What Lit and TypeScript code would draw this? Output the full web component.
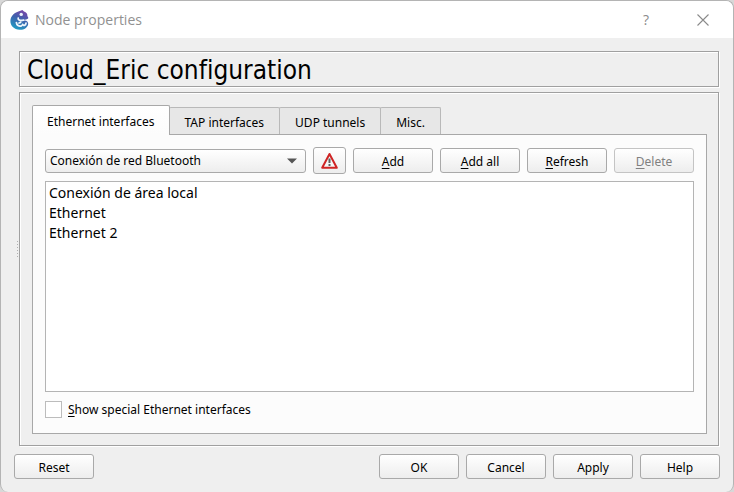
import { LitElement, html, css, svg } from "lit";
import { customElement, state } from "lit/decorators.js";
import { classMap } from "lit/directives/class-map.js";

const logo = svg`
  <defs>
    <linearGradient id="body" x1="0.7" y1="0" x2="0.3" y2="1">
      <stop offset="0" stop-color="#7a45a8"/>
      <stop offset="0.45" stop-color="#3d62ad"/>
      <stop offset="1" stop-color="#1f9fc4"/>
    </linearGradient>
  </defs>
  <path fill="url(#body)" d="M8.4 1.4 12.4 0 14 1.6C16.4 2.2 17.6 4 17.4 6L18.4 8C17.4 9.6 15 10 13.4 9.4L13.4 10.6C16 9.8 18.4 11.4 18.2 14 17.8 17.6 14 20 9.6 19.8 4 19.6 .2 15.6 .4 10.8 .6 6.4 3.4 3 8.4 1.4Z"/>
  <circle cx="11.2" cy="4.4" r="1.7" fill="#eef2fa"/>
  <path fill="none" stroke="#eef5fb" stroke-width="1.8" stroke-linecap="round" d="M8.2 8.2C7.8 10 10 11 13.4 10.2M6.4 12.6C6.6 15.2 9 16.8 11.4 15.8M16 13.2C15.8 15.6 13.2 16 12.6 14.4M9 13 10.6 12.4"/>
`;

@customElement("app-root")
export class AppRoot extends LitElement {
  @state() private tab = 0;

  private tabs = ["Ethernet interfaces", "TAP interfaces", "UDP tunnels", "Misc."];
  private interfaces = ["Conexión de área local", "Ethernet", "Ethernet 2"];

  static styles = css`
    :host {
      display: block;
      background: #d8d8d8;
      color: #000;
      font: 12px/16px "Noto Sans", sans-serif;
    }
    * { box-sizing: border-box; }
    .window {
      display: flex;
      flex-direction: column;
      min-height: 100vh;
      border: 1px solid #b4b4b4;
      border-bottom: 0;
      border-radius: 8px;
      background: #efefef;
      overflow: hidden;
    }
    .titlebar {
      display: flex;
      align-items: center;
      height: 37px;
      padding: 0 20px 0 9px;
      background: #fff;
      color: #919191;
      font: 14px/20px "Open Sans", "Noto Sans", sans-serif;
    }
    .logo { width: 20px; height: 20px; margin-right: 5px; }
    .title { flex: 1; }
    .caption {
      display: grid;
      place-items: center;
      width: 20px;
      height: 28px;
      margin-left: 37px;
      padding: 0;
      border: 0;
      background: none;
      color: #8a8a8a;
      font: inherit;
    }
    .content { flex: 1; display: flex; padding: 13px 14px 8px 14px; }
    .handle {
      flex: none;
      width: 4px;
      display: flex;
      flex-direction: column;
      justify-content: center;
      align-items: center;
      gap: 2px;
    }
    .handle i { width: 1px; height: 1px; background: #b0b0b0; }
    .main { flex: 1; display: flex; flex-direction: column; gap: 5px; }
    .frame { border: 1px solid #a0a0a0; box-shadow: 1px 1px 0 #fff, inset 1px 1px 0 #fff; }
    h1 {
      margin: 0;
      height: 36px;
      padding: 0 7px;
      font: 26px/36px "DejaVu Sans Condensed", "Noto Sans", sans-serif;
      font-variant-ligatures: none;
    }
    .panel { flex: 1; display: flex; flex-direction: column; padding: 12px 11px 11px 12px; }
    .tabs { display: flex; align-items: flex-end; height: 30px; }
    .tab {
      height: 27px;
      margin: 0 0 1px -1px;
      padding: 3px 15px 0;
      border: 1px solid #b9b9b9;
      border-bottom: 0;
      border-radius: 2px 2px 0 0;
      background: #e7e7e7;
      color: #000;
      font: inherit;
    }
    .tab:first-child { margin-left: 0; }
    .tab.on {
      height: 30px;
      margin-bottom: 0;
      padding: 2px 14px 0;
      border-color: #a8a8a8;
      background: linear-gradient(#fff, #fcfcfc);
      z-index: 1;
    }
    .pane {
      flex: 1;
      display: flex;
      flex-direction: column;
      margin-top: -1px;
      padding: 12px 12px 15px;
      border: 1px solid #a8a8a8;
      background: #fcfcfc;
    }
    .tools { display: flex; align-items: center; gap: 7px; margin-bottom: 7px; }
    .btn, .combo {
      border: 1px solid #a9a9a9;
      border-radius: 3px;
      background: linear-gradient(#fff, #ededed);
      color: #000;
      font: inherit;
    }
    .btn { flex: none; width: 80px; height: 25px; padding: 2px 0 0; }
    .btn:disabled { border-color: #c4c4c4; color: #808080; }
    .btn.warn { width: 33px; height: 27px; padding: 0; display: grid; place-items: center; }
    .select { flex: 1; display: grid; align-items: center; }
    .select > * { grid-area: 1 / 1; }
    .combo { appearance: none; width: 100%; height: 24px; padding: 0 24px 0 4px; }
    .arrow { justify-self: end; margin-right: 9px; pointer-events: none; }
    .list {
      flex: 1;
      margin: 0;
      padding: 1px 3px;
      border: 1px solid #b4b4b4;
      background: #fff;
      list-style: none;
      font-size: 14px;
      line-height: 20px;
    }
    .check { display: flex; align-items: center; gap: 6px; margin-top: 9px; align-self: flex-start; }
    .check input {
      appearance: none;
      width: 17px;
      height: 17px;
      margin: 0;
      border: 1px solid #bcbcbc;
      background: #fff;
    }
    .check input:checked { background: #6a6a6a; box-shadow: inset 0 0 0 3px #fff; }
    .footer { display: flex; gap: 7px; padding: 0 13px 13px; }
    .reset { margin-right: auto; }
    u { text-underline-offset: 2px; text-decoration-thickness: 1px; }
  `;

  render() {
    return html`
      <div class="window">
        <header class="titlebar">
          <svg class="logo" viewBox="0 0 20 20" aria-hidden="true">${logo}</svg>
          <span class="title">Node properties</span>
          <button class="caption" aria-label="Context help">?</button>
          <button class="caption" aria-label="Close">
            <svg width="12" height="12" viewBox="0 0 12 12"><path d="M.5.5l11 11M11.5.5l-11 11" fill="none" stroke="#8a8a8a" stroke-width="1.1"/></svg>
          </button>
        </header>
        <main class="content">
          <div class="handle">${[0, 1, 2, 3, 4, 5].map(() => html`<i></i>`)}</div>
          <div class="main">
            <h1 class="frame">Cloud_Eric configuration</h1>
            <section class="frame panel">
              <div class="tabs" role="tablist">
                ${this.tabs.map((t, i) => html`
                  <button role="tab" class=${classMap({ tab: true, on: i === this.tab })}
                    aria-selected=${i === this.tab} @click=${() => (this.tab = i)}>${t}</button>`)}
              </div>
              <div class="pane" role="tabpanel">
                <div class="tools">
                  <div class="select">
                    <select class="combo" aria-label="Interface"><option>Conexión de red Bluetooth</option></select>
                    <svg class="arrow" width="10" height="6" viewBox="0 0 10 6"><path d="M0 .5h10L5 5.5z" fill="#555"/></svg>
                  </div>
                  <button class="btn warn" aria-label="Warning">
                    <svg width="18" height="18" viewBox="0 0 18 18">
                      <path d="M8.5 2 15.8 15.8H1.2Z" fill="#f6f6f6" stroke="#cf2424" stroke-width="2" stroke-linejoin="round"/>
                      <path d="M8.5 6.6v4.4M8.5 12v2" stroke="#5e5e5e" stroke-width="2"/>
                    </svg>
                  </button>
                  <button class="btn"><u>A</u>dd</button>
                  <button class="btn"><u>A</u>dd all</button>
                  <button class="btn"><u>R</u>efresh</button>
                  <button class="btn" disabled><u>D</u>elete</button>
                </div>
                <ul class="list" role="listbox" aria-label="Interfaces">
                  ${this.interfaces.map((n) => html`<li role="option">${n}</li>`)}
                </ul>
                <label class="check"><input type="checkbox" /><span><u>S</u>how special Ethernet interfaces</span></label>
              </div>
            </section>
          </div>
        </main>
        <footer class="footer">
          <button class="btn reset">Reset</button>
          <button class="btn">OK</button>
          <button class="btn">Cancel</button>
          <button class="btn">Apply</button>
          <button class="btn">Help</button>
        </footer>
      </div>
    `;
  }
}
